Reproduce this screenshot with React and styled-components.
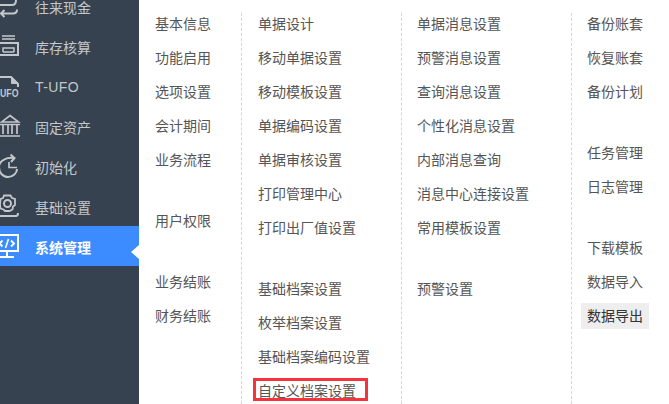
import React from "react";
import styled, { createGlobalStyle } from "styled-components";

const Global = createGlobalStyle`
  html, body { margin: 0; padding: 0; height: 100%; overflow: hidden; background: #fff; }
  #root { height: 100%; }
`;

const Page = styled.div`
  display: flex;
  height: 404px;
  font-family: "Noto Sans CJK SC", "Liberation Sans", sans-serif;
  font-size: 14px;
`;

const Sidebar = styled.nav`
  width: 139px;
  flex: none;
  background: #36424f;
  overflow: hidden;
`;

const NavList = styled.div`
  display: flex;
  flex-direction: column;
  margin-top: -14px;
`;

const NavRow = styled.div`
  position: relative;
  display: flex;
  align-items: center;
  height: 40px;
  gap: 15px;
  color: ${(p) => (p.$active ? "#ffffff" : "#c3c7cb")};
  background: ${(p) => (p.$active ? "#3c8cff" : "transparent")};
  font-weight: ${(p) => (p.$active ? 700 : 400)};
`;

const NavLabel = styled.span`
  line-height: 12px;
  padding-top: 2px;
  font-family: ${(p) => (p.$latin ? '"Liberation Sans", sans-serif' : "inherit")};
  letter-spacing: ${(p) => (p.$latin ? "0.4px" : "0")};
`;

const ActiveArrow = styled.span`
  position: absolute;
  right: 0;
  top: 19px;
  width: 0;
  height: 0;
  border-style: solid;
  border-width: 7px 8px 7px 0;
  border-color: transparent #ffffff transparent transparent;
`;

const IconBox = styled.svg`
  width: 20px;
  height: 24px;
  flex: none;
  overflow: visible;
  fill: none;
  stroke: currentColor;
  stroke-width: 2;
`;

const Menu = styled.main`
  flex: 1;
  display: flex;
  padding-top: 13px;
  background: #fff;
  overflow: hidden;
`;

const Column = styled.section`
  box-sizing: border-box;
  width: ${(p) => p.$width}px;
  flex: none;
  padding-left: ${(p) => p.$pad}px;
  border-left: ${(p) => (p.$divided ? "1px dashed #d6d6d6" : "0")};
  display: flex;
  flex-direction: column;
  gap: 35px;
`;

const Group = styled.div`
  display: flex;
  flex-direction: column;
  align-items: flex-start;
  gap: 8px;
  &:first-child { margin-top: -2px; }
`;

const Item = styled.div`
  position: relative;
  height: 26px;
  line-height: 24px;
  padding: 0 6px;
  white-space: nowrap;
  color: ${(p) => (p.$selected ? "#333333" : "#555555")};
  background: ${(p) => (p.$selected ? "#eeeeee" : "transparent")};
`;

const Callout = styled.span`
  position: absolute;
  left: 1px;
  top: 0;
  width: 115px;
  height: 23px;
  box-sizing: border-box;
  border: 3px solid #f4333c;
`;

const icons = {
  cash: (
    <IconBox viewBox="0 0 20 24">
      <path d="M-2 11H12C15 11 16 9 16 6" />
      <path d="M17 15.500C17 18 16 19.500 13 19.500H1M4.500 16L1 19.500L4.500 23" />
    </IconBox>
  ),
  stock: (
    <IconBox viewBox="0 0 20 24">
      <path d="M2 2h13M2 5h13" strokeWidth="1.500" />
      <path d="M-2 9h20v12H-2" />
      <path d="M3 18v-4h11v4M3 18h11" strokeWidth="1.500" />
    </IconBox>
  ),
  ufo: (
    <IconBox viewBox="0 0 20 24">
      <path d="M-2 3h13l7 7v3" />
      <path d="M11.500 3l6.500 6.500h-6.500z" fill="currentColor" strokeWidth="1" />
      <text x="0" y="23" fill="currentColor" stroke="none" fontFamily="'Liberation Sans', sans-serif" fontSize="11" fontWeight="700" textLength="18.500" lengthAdjust="spacingAndGlyphs">UFO</text>
    </IconBox>
  ),
  bank: (
    <IconBox viewBox="0 0 20 24">
      <path d="M10 1.500L18.500 8H1.500z" strokeWidth="1.600" />
      <path d="M0 10.500h20M3 11v9M8 11v9M12 11v9M17 11v9M-1 22h21" strokeWidth="1.700" />
    </IconBox>
  ),
  init: (
    <IconBox viewBox="0 0 20 24">
      <path d="M13 4C5 3-1 8-1 13C-1 19 3 23 8 23C13 23 17 19 17 15" />
      <path d="M10.500 .500L14.500 4L11 8" />
      <path d="M9 8V13.500H17" strokeWidth="1.700" />
    </IconBox>
  ),
  base: (
    <IconBox viewBox="0 0 20 24">
      <path d="M4 1.500h6.500l1.500 2.500 3 1v6l-2 1.500-.5 3-3 1.500H5l-1.500-1.500-3-1L0 11 .5 5l2.500-1z" strokeWidth="1.800" />
      <circle cx="7.500" cy="9.500" r="3.500" />
      <path d="M-1 22h17c1.500 0 2-1 2-3" />
    </IconBox>
  ),
  system: (
    <IconBox viewBox="0 0 20 24">
      <path d="M-2 1h20v16H-2M7 17v5M0 23h14" />
      <path d="M2.500 6.500l-3 3 3 3M11 6.500l3 3-3 3" strokeWidth="1.800" />
      <path d="M8.500 5l-3 9" strokeWidth="1.600" />
    </IconBox>
  ),
};

const nav = [
  { label: "往来现金", icon: "cash" },
  { label: "库存核算", icon: "stock" },
  { label: "T-UFO", icon: "ufo", latin: true },
  { label: "固定资产", icon: "bank" },
  { label: "初始化", icon: "init" },
  { label: "基础设置", icon: "base" },
  { label: "系统管理", icon: "system", active: true },
];

const columns = [
  {
    width: 102, pad: 10,
    groups: [["基本信息", "功能启用", "选项设置", "会计期间", "业务流程"], ["用户权限"], ["业务结账", "财务结账"]],
  },
  {
    width: 160, pad: 10, divided: true,
    groups: [
      ["单据设计", "移动单据设置", "移动模板设置", "单据编码设置", "单据审核设置", "打印管理中心", "打印出厂值设置"],
      ["基础档案设置", "枚举档案设置", "基础档案编码设置", "自定义档案设置"],
    ],
  },
  {
    width: 170, pad: 9, divided: true,
    groups: [["单据消息设置", "预警消息设置", "查询消息设置", "个性化消息设置", "内部消息查询", "消息中心连接设置", "常用模板设置"], ["预警设置"]],
  },
  {
    width: 98, pad: 9, divided: true,
    groups: [["备份账套", "恢复账套", "备份计划"], ["任务管理", "日志管理"], ["下载模板", "数据导入", "数据导出"]],
  },
];

export default function App() {
  return (
    <Page>
      <Global />
      <Sidebar>
        <NavList>
          {nav.map((n) => (
            <NavRow key={n.label} $active={n.active}>
              {icons[n.icon]}
              <NavLabel $latin={n.latin}>{n.label}</NavLabel>
              {n.active && <ActiveArrow />}
            </NavRow>
          ))}
        </NavList>
      </Sidebar>
      <Menu>
        {columns.map((c, i) => (
          <Column key={i} $width={c.width} $pad={c.pad} $divided={c.divided}>
            {c.groups.map((g, j) => (
              <Group key={j}>
                {g.map((t) => (
                  <Item key={t} $selected={t === "数据导出"}>
                    {t}
                    {t === "自定义档案设置" && <Callout />}
                  </Item>
                ))}
              </Group>
            ))}
          </Column>
        ))}
      </Menu>
    </Page>
  );
}
